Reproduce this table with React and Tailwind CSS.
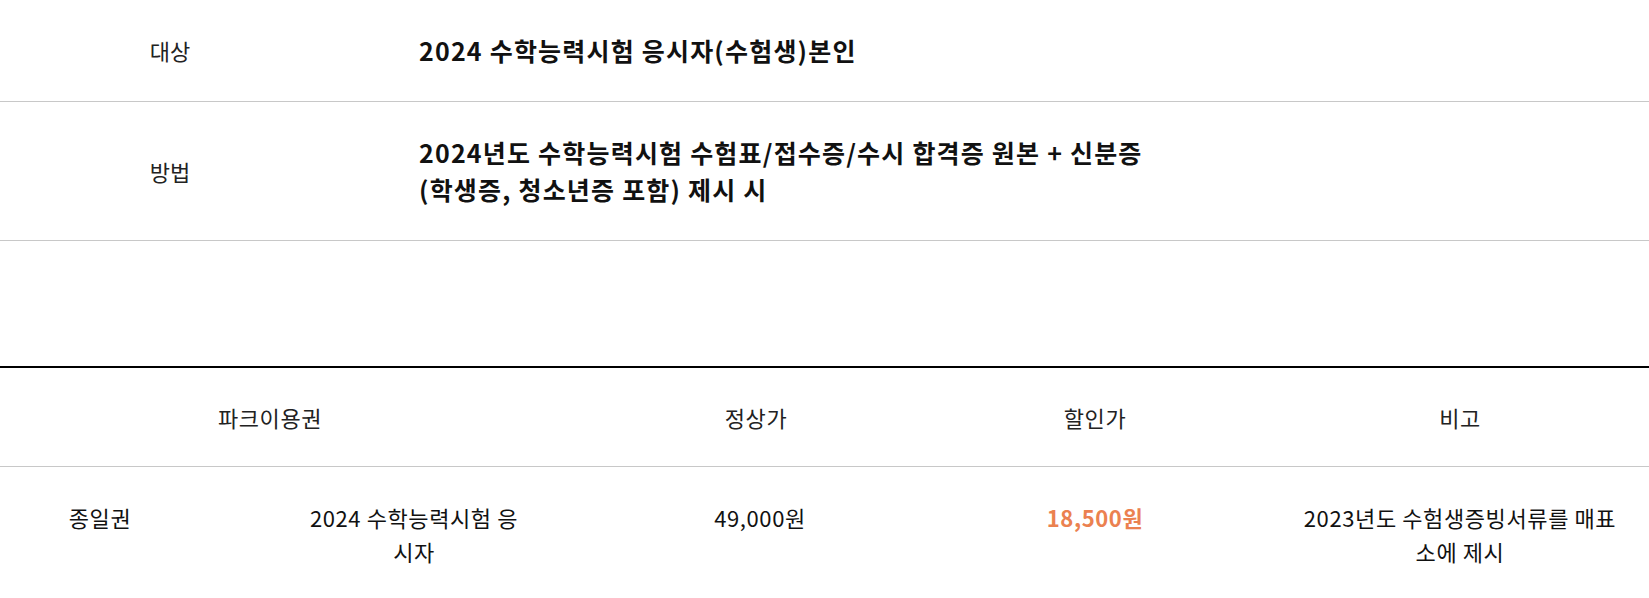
import React from 'react';

const font = { fontFamily: '"Noto Sans CJK KR", "Noto Sans", sans-serif' };

const infoRows = [
  { label: '대상', lines: ['2024 수학능력시험 응시자(수험생)본인'] },
  {
    label: '방법',
    lines: ['2024년도 수학능력시험 수험표/접수증/수시 합격증 원본 + 신분증', '(학생증, 청소년증 포함) 제시 시'],
  },
];

const App = () => {
  return (
    <div className="w-[1649px] bg-white text-[#111]" style={font}>
      {/* 대상 / 방법 */}
      <section>
        {infoRows.map((row) => (
          <div key={row.label} className="flex items-center border-b border-[#c8c8c8] py-[32px]">
            <div className="w-[340px] text-center text-[22px] text-[#222]">{row.label}</div>
            <div className="pl-[79px] text-[25px] font-bold leading-[37px] tracking-[1.2px]">
              {row.lines.map((line, i) => (
                <p key={i}>{line}</p>
              ))}
            </div>
          </div>
        ))}
      </section>

      {/* 요금표 */}
      <section className="mt-[125px] border-t-2 border-black">
        <div className="flex border-b border-[#c8c8c8] py-[32px] text-[22px] leading-[34px] tracking-[0.6px] text-[#222]">
          <div className="w-[628px] pr-[88px] text-center">파크이용권</div>
          <div className="w-[256px] text-center">정상가</div>
          <div className="w-[406px] pl-[16px] text-center">할인가</div>
          <div className="w-[340px] text-center">비고</div>
        </div>
        <div className="flex items-start pt-[33px] pb-[30px] text-[22px] leading-[34px] tracking-[0.6px]">
          <div className="w-[200px] text-center">종일권</div>
          <div className="w-[428px] px-[108px] text-center">2024 수학능력시험 응시자</div>
          <div className="w-[256px] pl-[8px] text-center">49,000원</div>
          <div className="w-[406px] pl-[16px] text-center font-semibold text-[#eb8150]">18,500원</div>
          <div className="w-[340px] px-[12px] text-center">2023년도 수험생증빙서류를 매표소에 제시</div>
        </div>
      </section>
    </div>
  );
};

export default App;
